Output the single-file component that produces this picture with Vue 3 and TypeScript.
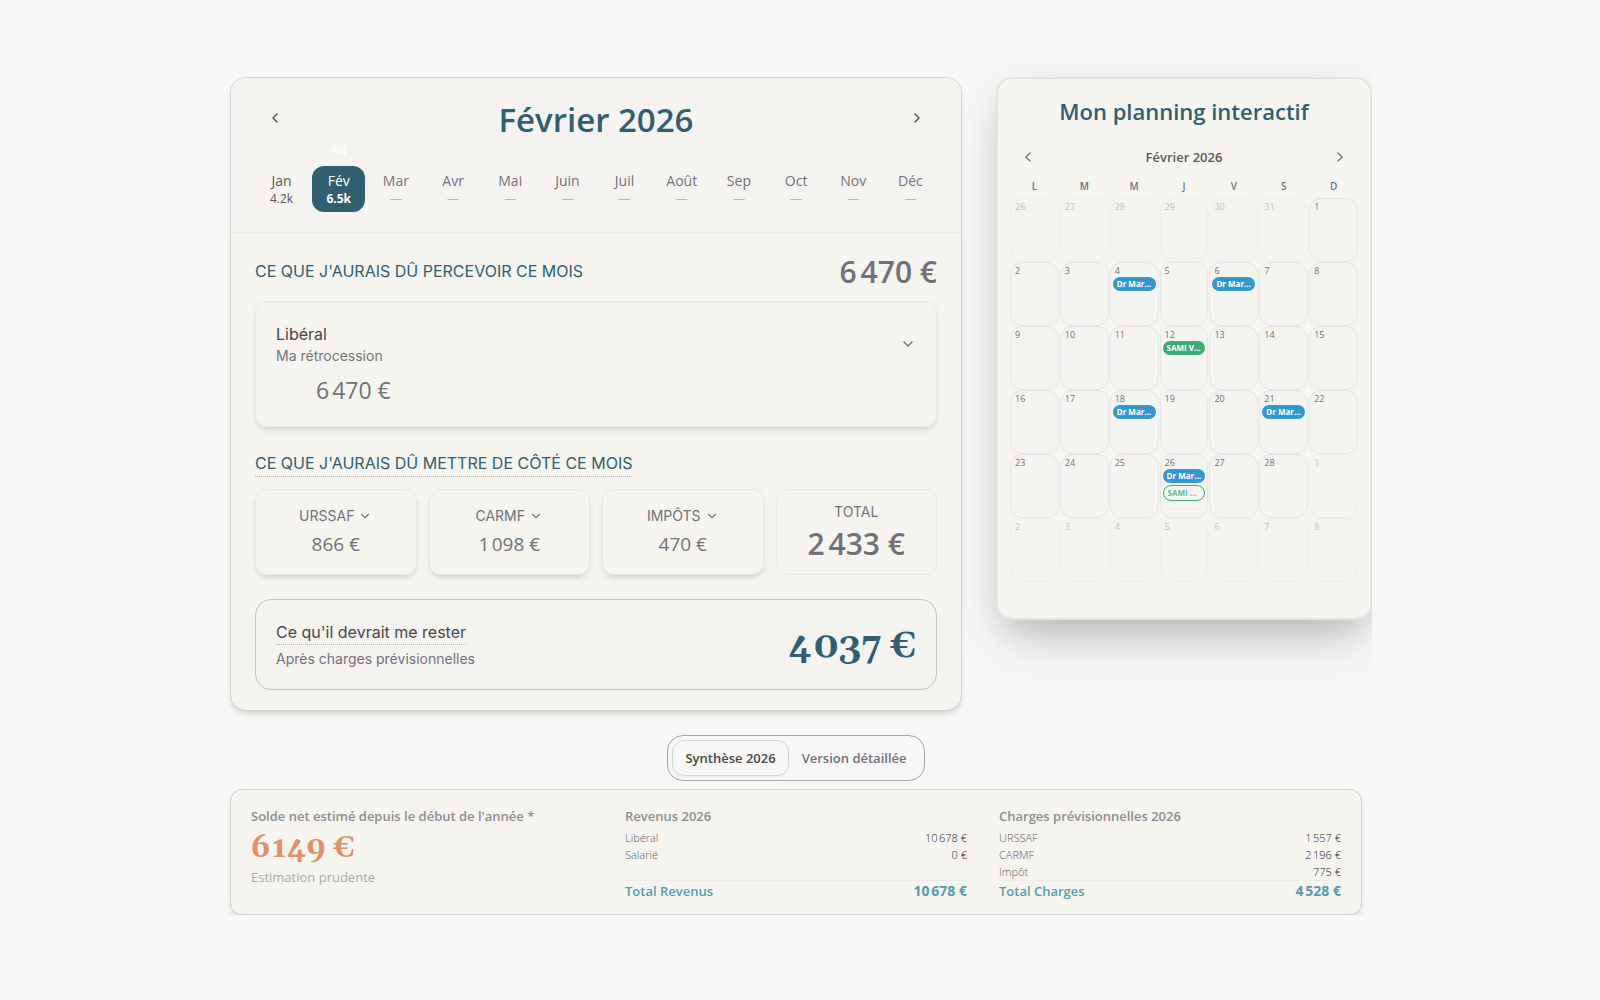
<script setup lang="ts">
import { ref } from 'vue'

interface Month { label: string; value: string | null }
interface CalEvent { title: string; kind: 'blue' | 'green' | 'outline' }
interface Day { num: number; outside: boolean; events: CalEvent[] }
interface Line { label: string; value: string }
interface Group { title: string; lines: Line[]; totalLabel: string; total: string }

const months: Month[] = [
  { label: 'Jan', value: '4.2k' },
  { label: 'Fév', value: '6.5k' },
  ...['Mar', 'Avr', 'Mai', 'Juin', 'Juil', 'Août', 'Sep', 'Oct', 'Nov', 'Déc'].map(
    (label): Month => ({ label, value: null })
  )
]
const activeMonth = ref(1)

const charges: Line[] = [
  { label: 'URSSAF', value: '866 €' },
  { label: 'CARMF', value: '1\u202f098 €' },
  { label: 'IMPÔTS', value: '470 €' }
]

const weekdays: string[] = ['L', 'M', 'M', 'J', 'V', 'S', 'D']

const events: Record<number, CalEvent[]> = {
  4: [{ title: 'Dr Martin', kind: 'blue' }],
  6: [{ title: 'Dr Martin', kind: 'blue' }],
  12: [{ title: 'SAMI Ville', kind: 'green' }],
  18: [{ title: 'Dr Martin', kind: 'blue' }],
  21: [{ title: 'Dr Martin', kind: 'blue' }],
  26: [
    { title: 'Dr Martin', kind: 'blue' },
    { title: 'SAMI Ville', kind: 'outline' }
  ]
}

const days: Day[] = Array.from({ length: 42 }, (_, i): Day => {
  if (i < 6) return { num: 26 + i, outside: true, events: [] }
  const num = i - 5
  return num <= 28
    ? { num, outside: false, events: events[num] ?? [] }
    : { num: num - 28, outside: true, events: [] }
})

const view = ref<'summary' | 'detail'>('summary')

const groups: Group[] = [
  {
    title: 'Revenus 2026',
    lines: [
      { label: 'Libéral', value: '10\u202f678 €' },
      { label: 'Salarié', value: '0 €' }
    ],
    totalLabel: 'Total Revenus',
    total: '10\u202f678 €'
  },
  {
    title: 'Charges prévisionnelles 2026',
    lines: [
      { label: 'URSSAF', value: '1\u202f557 €' },
      { label: 'CARMF', value: '2\u202f196 €' },
      { label: 'Impôt', value: '775 €' }
    ],
    totalLabel: 'Total Charges',
    total: '4\u202f528 €'
  }
]
</script>

<template>
  <main class="page">
    <div class="top">
      <section class="month-card">
        <header class="month-head">
          <div class="title-row">
            <button class="nav-btn" type="button" aria-label="Mois précédent">
              <svg class="icon" viewBox="0 0 24 24"><path d="m15 18-6-6 6-6" /></svg>
            </button>
            <h1>Février 2026</h1>
            <button class="nav-btn" type="button" aria-label="Mois suivant">
              <svg class="icon" viewBox="0 0 24 24"><path d="m9 18 6-6-6-6" /></svg>
            </button>
          </div>
          <div class="strip">
            <button
              v-for="(m, i) in months"
              :key="m.label"
              type="button"
              class="month"
              :class="{ active: i === activeMonth, filled: m.value }"
              @click="activeMonth = i"
            >
              <span v-if="i === 1" class="today"><span>Auj</span><span class="arrow">↓</span></span>
              <span class="month-name">{{ m.label }}</span>
              <span class="month-value">{{ m.value ?? '—' }}</span>
            </button>
          </div>
        </header>

        <div class="month-body">
          <div class="income-head">
            <h2>CE QUE J'AURAIS DÛ PERCEVOIR CE MOIS</h2>
            <strong class="big">6&#8239;470 €</strong>
          </div>
          <button class="income tile" type="button">
            <span class="income-top">
              <span class="income-text">
                <span class="name">Libéral</span>
                <span class="sub">Ma rétrocession</span>
              </span>
              <svg class="icon" viewBox="0 0 24 24"><path d="m6 9 6 6 6-6" /></svg>
            </span>
            <span class="income-amount">6&#8239;470 €</span>
          </button>

          <h2 class="dotted aside-title">CE QUE J'AURAIS DÛ METTRE DE CÔTÉ CE MOIS</h2>
          <div class="charges">
            <button v-for="c in charges" :key="c.label" type="button" class="charge tile">
              <span class="charge-label">
                {{ c.label }}
                <svg class="icon small" viewBox="0 0 24 24"><path d="m6 9 6 6 6-6" /></svg>
              </span>
              <span class="charge-value">{{ c.value }}</span>
            </button>
            <div class="charge">
              <span class="charge-label">TOTAL</span>
              <strong class="big">2&#8239;433 €</strong>
            </div>
          </div>

          <div class="rest">
            <div class="rest-text">
              <span class="name dotted">Ce qu'il devrait me rester</span>
              <span class="sub">Après charges prévisionnelles</span>
            </div>
            <strong class="rest-amount">4&#8239;037 €</strong>
          </div>
        </div>
      </section>

      <section class="planning">
        <h2 class="planning-title">Mon planning interactif</h2>
        <div class="planning-nav">
          <button type="button" aria-label="Mois précédent">
            <svg class="icon" viewBox="0 0 24 24"><path d="m15 18-6-6 6-6" /></svg>
          </button>
          <span>Février 2026</span>
          <button type="button" aria-label="Mois suivant">
            <svg class="icon" viewBox="0 0 24 24"><path d="m9 18 6-6-6-6" /></svg>
          </button>
        </div>
        <div class="week">
          <span v-for="(d, i) in weekdays" :key="i">{{ d }}</span>
        </div>
        <div class="days">
          <div v-for="(d, i) in days" :key="i" class="day" :class="{ outside: d.outside }">
            <span class="num">{{ d.num }}</span>
            <div v-for="e in d.events" :key="e.title" class="event" :class="e.kind">{{ e.title }}</div>
          </div>
        </div>
      </section>
    </div>

    <div class="bottom">
      <div class="switch">
        <button type="button" :class="{ on: view === 'summary' }" @click="view = 'summary'">Synthèse 2026</button>
        <button type="button" :class="{ on: view === 'detail' }" @click="view = 'detail'">Version détaillée</button>
      </div>
      <section class="summary">
        <div class="balance">
          <h3>Solde net estimé depuis le début de l'année *</h3>
          <strong>6&#8239;149 €</strong>
          <span>Estimation prudente</span>
        </div>
        <div v-for="g in groups" :key="g.title" class="group">
          <h3>{{ g.title }}</h3>
          <div v-for="l in g.lines" :key="l.label" class="line">
            <span class="line-label">{{ l.label }}</span>
            <span>{{ l.value }}</span>
          </div>
          <div class="line total">
            <span>{{ g.totalLabel }}</span>
            <strong>{{ g.total }}</strong>
          </div>
        </div>
      </section>
    </div>
  </main>
</template>

<style>
body {
  background: #f7f7f7;
}
</style>

<style scoped>
.page {
  --teal: #2f5f70;
  --ink: #4a4743;
  --grey: #71717a;
  --paper: #f5f4ef;
  --paper-cool: #f5f3f0;
  --line: #e8e8e6;
  --segoe: 'Open Sans', 'Noto Sans', sans-serif;
  --dm: Inter, sans-serif;
  box-sizing: border-box;
  max-width: 1144px;
  margin: 77px auto 0;
  padding-left: 2px;
  font-family: var(--segoe);
  color: var(--grey);
  clip-path: inset(-77px 0 0 -77px);
}
.page * {
  box-sizing: border-box;
}
h1, h2, h3 {
  margin: 0;
}
button {
  margin: 0;
  padding: 0;
  border: 0;
  background: none;
  font: inherit;
  color: inherit;
  cursor: pointer;
}
.icon {
  width: 16px;
  height: 16px;
  fill: none;
  stroke: currentColor;
  stroke-width: 2;
  stroke-linecap: round;
  stroke-linejoin: round;
}
.icon.small {
  width: 14px;
  height: 14px;
}
.top {
  display: grid;
  grid-template-columns: minmax(0, 732fr) minmax(0, 376fr);
  gap: 34px;
}

.month-card {
  border: 1px solid #d3d2ce;
  border-radius: 16px;
  background: var(--paper);
  box-shadow: 0 4px 6px -1px rgba(0, 0, 0, 0.1), 0 2px 4px -2px rgba(0, 0, 0, 0.1);
}
.month-head {
  padding: 20px 24px;
  border-bottom: 1px solid #ebebe9;
  border-radius: 15px 15px 0 0;
  background: var(--paper-cool);
}
.title-row {
  display: flex;
  align-items: center;
  justify-content: space-between;
}
.nav-btn {
  display: flex;
  align-items: center;
  justify-content: center;
  width: 40px;
  height: 40px;
  color: var(--ink);
}
h1 {
  padding-top: 4px;
  font-size: 33px;
  line-height: 36px;
  font-weight: 600;
  color: var(--teal);
}
.strip {
  display: grid;
  grid-template-columns: repeat(12, minmax(0, 1fr));
  gap: 4px;
  margin-top: 28px;
}
.month {
  position: relative;
  display: flex;
  flex-direction: column;
  align-items: center;
  padding: 5px 0;
  border-radius: 12px;
}
.month-name {
  font-size: 14px;
  line-height: 20px;
}
.month-value {
  font-size: 12px;
  line-height: 16px;
  color: #b4b4b6;
}
.month.filled,
.month.filled .month-value {
  color: #5a5856;
}
.month.active {
  background: var(--teal);
}
.month.active,
.month.active .month-value {
  color: #fff;
}
.month.active .month-value {
  font-weight: 700;
}
.today {
  position: absolute;
  left: 0;
  right: 0;
  bottom: 100%;
  display: flex;
  flex-direction: column;
  font-size: 10px;
  line-height: 14px;
  font-weight: 600;
  color: #fff;
}
.today .arrow {
  font-size: 8px;
  line-height: 10px;
}

.month-body {
  padding: 20px 24px;
}
.income-head {
  display: flex;
  align-items: center;
  justify-content: space-between;
  height: 36px;
  margin-bottom: 12px;
}
.income-head .big {
  padding-top: 2px;
}
h2 {
  font-family: var(--dm);
  font-size: 16px;
  line-height: 24px;
  font-weight: 400;
  color: var(--teal);
}
.big {
  font-size: 30px;
  line-height: 36px;
  font-weight: 600;
}
.tile {
  box-shadow: 0 4px 6px -1px rgba(0, 0, 0, 0.1), 0 2px 4px -2px rgba(0, 0, 0, 0.1);
}
.income {
  display: block;
  width: 100%;
  padding: 20px;
  border: 1px solid var(--line);
  border-radius: 12px;
  text-align: left;
}
.income-top {
  display: flex;
  align-items: center;
  justify-content: space-between;
}
.income-text,
.rest-text {
  display: flex;
  flex-direction: column;
  align-items: flex-start;
}
.name {
  font-family: var(--dm);
  font-size: 16px;
  line-height: 24px;
  color: var(--ink);
}
.sub {
  font-family: var(--dm);
  font-size: 14px;
  line-height: 20px;
}
.income-amount {
  display: block;
  margin: 8px 0 0 40px;
  font-size: 23px;
  line-height: 32px;
}
.dotted {
  padding-bottom: 1px;
  border-bottom: 1px dotted #b3b3b3;
}
.aside-title {
  width: fit-content;
  margin: 24px 0 12px;
}
.charges {
  display: grid;
  grid-template-columns: repeat(4, minmax(0, 1fr));
  gap: 12px;
}
.charge {
  display: flex;
  flex-direction: column;
  align-items: center;
  justify-content: center;
  gap: 4px;
  height: 86px;
  border: 1px solid var(--line);
  border-radius: 12px;
}
.charge-label {
  display: flex;
  align-items: center;
  gap: 4px;
  font-family: var(--dm);
  font-size: 14px;
  line-height: 20px;
}
.charge-value {
  font-size: 19px;
  line-height: 28px;
}
.rest {
  display: flex;
  align-items: center;
  justify-content: space-between;
  margin-top: 24px;
  padding: 20px;
  border: 1px solid #b9c5c8;
  border-radius: 16px;
  background: var(--paper-cool);
}
.rest .dotted {
  padding-bottom: 0;
}
.rest .sub {
  margin-top: 4px;
}
.rest-amount {
  padding-top: 4px;
  font-family: Gelasio, Georgia, 'DejaVu Serif', serif;
  font-size: 36px;
  line-height: 40px;
  font-weight: 700;
  color: var(--teal);
}

.planning {
  align-self: start;
  padding: 16px 12px 36px;
  border: 2px solid #e3e3e2;
  border-radius: 16px;
  background: var(--paper);
  box-shadow: 0 25px 50px -12px rgba(0, 0, 0, 0.25), 0 8px 30px rgba(0, 0, 0, 0.06);
}
.planning-title {
  font-family: var(--segoe);
  font-size: 22px;
  line-height: 32px;
  font-weight: 600;
  text-align: center;
}
.planning-nav {
  display: flex;
  align-items: center;
  justify-content: space-between;
  margin-top: 18px;
  font-size: 13px;
  line-height: 24px;
  font-weight: 600;
  color: #5a5856;
}
.planning-nav button {
  display: flex;
  align-items: center;
  justify-content: center;
  width: 36px;
  height: 24px;
  color: var(--grey);
}
.week {
  display: grid;
  grid-template-columns: repeat(7, minmax(0, 1fr));
  gap: 1px;
  margin: 9px 0 4px;
  font-size: 10px;
  line-height: 16px;
  font-weight: 600;
  text-align: center;
}
.days {
  display: grid;
  grid-template-columns: repeat(7, minmax(0, 1fr));
  grid-auto-rows: 64px;
  column-gap: 1px;
}
.day {
  display: flex;
  flex-direction: column;
  padding: 2px;
  border: 1px solid #e5e5e7;
  border-radius: 12px;
  background: var(--paper-cool);
}
.day.outside {
  opacity: 0.4;
}
.num {
  padding-left: 2px;
  font-size: 9px;
  line-height: 12px;
}
.event {
  flex: none;
  overflow: hidden;
  padding: 0 4px;
  border-radius: 8px;
  font-size: 8px;
  line-height: 14px;
  font-weight: 700;
  color: #fff;
  white-space: nowrap;
  text-overflow: ellipsis;
}
.event + .event {
  margin-top: 2px;
}
.event.blue {
  background: #3498cf;
}
.event.green {
  background: #3aab74;
}
.event.outline {
  border: 1px solid #3aab74;
  color: #5dba8c;
}

.bottom {
  margin: 24px 10px 0 0;
}
.switch {
  display: flex;
  width: fit-content;
  margin: 0 auto 8px;
  padding: 4px;
  border: 1px solid #a3a3a0;
  border-radius: 16px;
  font-size: 13px;
  line-height: 34px;
  font-weight: 600;
}
.switch button {
  padding: 0 12px;
  border: 1px solid transparent;
  border-radius: 12px;
}
.switch .on {
  border-color: #d6d5d2;
  color: var(--ink);
  box-shadow: 0 1px 2px rgba(0, 0, 0, 0.06);
}
.summary {
  display: grid;
  grid-template-columns: repeat(3, minmax(0, 1fr));
  column-gap: 32px;
  padding: 16px 20px 13px;
  border: 1px solid #d3d2ce;
  border-radius: 12px;
  background: var(--paper);
  box-shadow: 0 4px 6px -1px rgba(0, 0, 0, 0.1), 0 2px 4px -2px rgba(0, 0, 0, 0.1);
}
h3 {
  font-size: 13px;
  line-height: 20px;
  font-weight: 600;
  color: #8d8d93;
}
.balance {
  display: flex;
  flex-direction: column;
}
.balance strong {
  padding-top: 3px;
  font-family: Gelasio, Georgia, 'DejaVu Serif', serif;
  font-size: 30px;
  line-height: 38px;
  font-weight: 700;
  color: #e29069;
}
.balance span {
  font-size: 13px;
  line-height: 20px;
  color: #a9a9ab;
}
.group {
  display: flex;
  flex-direction: column;
}
.group h3 {
  margin-bottom: 3px;
}
.line {
  display: flex;
  justify-content: space-between;
  font-size: 11px;
  line-height: 17px;
  font-weight: 300;
  color: #2a2826;
}
.line-label {
  color: #5b5b64;
}
.total {
  margin-top: auto;
  border-top: 1px solid #ebebe9;
  font-size: 13px;
  line-height: 20px;
  font-weight: 600;
  color: #569bab;
}
.total strong {
  font-size: 14px;
  font-weight: 700;
}
</style>
